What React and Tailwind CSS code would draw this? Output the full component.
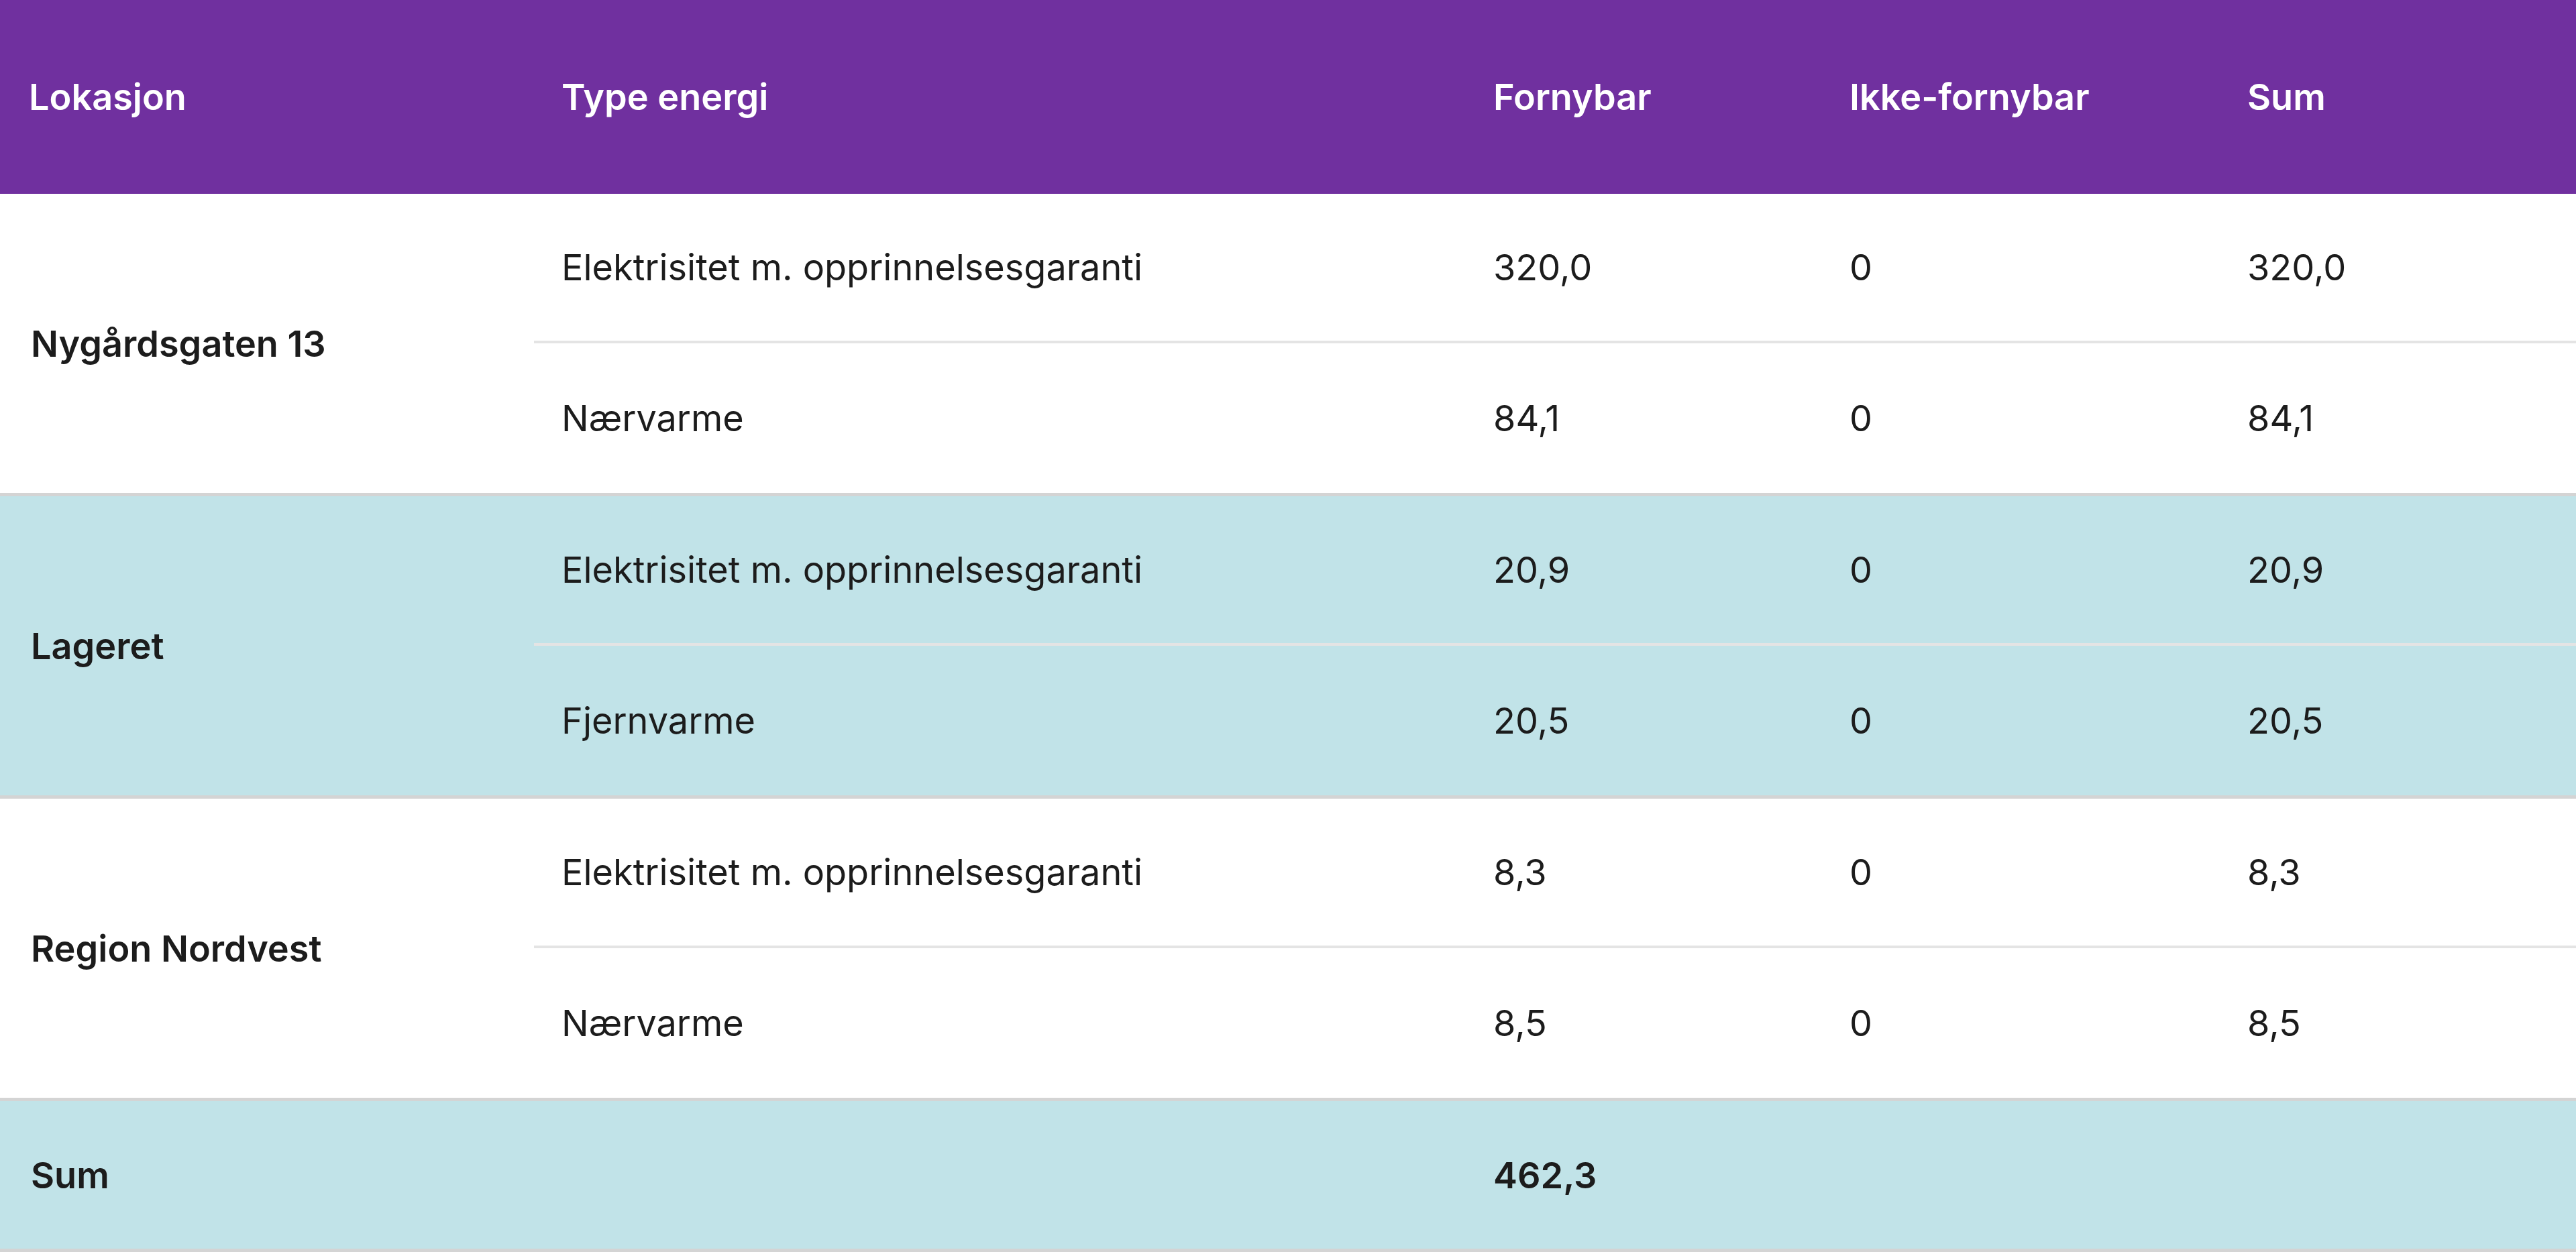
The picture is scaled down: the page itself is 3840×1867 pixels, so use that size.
const GROUPS = [
  { name: "Nygårdsgaten 13", bg: "bg-white", rows: [["Elektrisitet m. opprinnelsesgaranti", "320,0", "0", "320,0"], ["Nærvarme", "84,1", "0", "84,1"]] },
  { name: "Lageret", bg: "bg-[#c1e3e8]", rows: [["Elektrisitet m. opprinnelsesgaranti", "20,9", "0", "20,9"], ["Fjernvarme", "20,5", "0", "20,5"]] },
  { name: "Region Nordvest", bg: "bg-white", rows: [["Elektrisitet m. opprinnelsesgaranti", "8,3", "0", "8,3"], ["Nærvarme", "8,5", "0", "8,5"]] },
];

const COLS = "grid grid-cols-[796px_1389px_531px_593px_1fr]";

export default function App() {
  return (
    <div className="w-[3840px] h-[1867px] bg-white text-[#1c1c1c] text-[54px]" style={{ fontFamily: "Inter, 'Noto Sans', sans-serif" }}>
      <div className={`${COLS} h-[289px] items-center bg-[#70309f] text-white font-semibold`}>
        <div className="pl-[43px]">Lokasjon</div>
        <div className="pl-[41px]">Type energi</div>
        <div className="pl-[41px]">Fornybar</div>
        <div className="pl-[41px]">Ikke-fornybar</div>
        <div className="pl-[41px]">Sum</div>
      </div>
      {GROUPS.map((g) => (
        <div key={g.name} className={`${COLS} ${g.bg} border-b-[5px] border-[#d4d4d4]`}>
          <div className="row-span-2 flex items-center pl-[46px] font-semibold">{g.name}</div>
          {g.rows.map((r, i) => (
            <div key={i} className={`col-span-4 grid grid-cols-[1389px_531px_593px_1fr] h-[223px] items-center ${i === 0 ? "border-b-[4px] border-[#e4e4e4]" : ""}`}>
              {r.map((c, j) => (
                <div key={j} className="pl-[41px]">{c}</div>
              ))}
            </div>
          ))}
        </div>
      ))}
      <div className={`${COLS} h-[225px] items-center bg-[#c1e3e8] font-semibold border-b-[5px] border-[#d4d4d4]`}>
        <div className="pl-[46px]">Sum</div>
        <div />
        <div className="pl-[41px]">462,3</div>
        <div />
        <div />
      </div>
    </div>
  );
}
